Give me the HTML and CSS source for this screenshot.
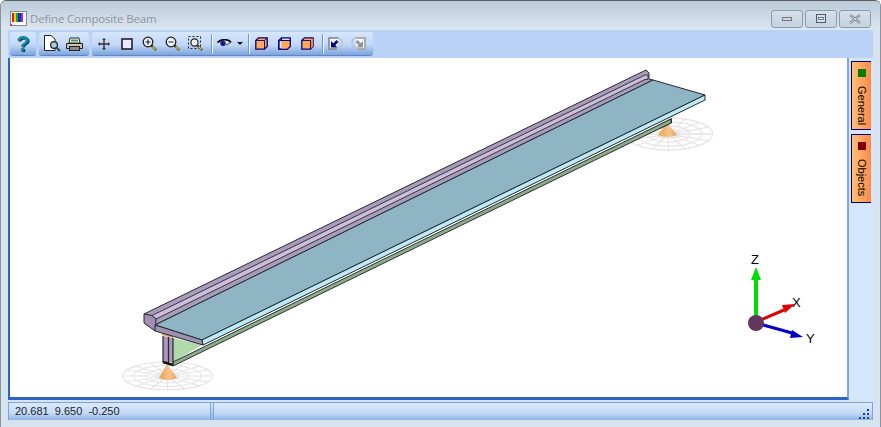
FILE: index.html
```html
<!DOCTYPE html>
<html lang="en">
  <head>
    <meta charset="UTF-8" />
    <title>Define Composite Beam</title>
    <link rel="stylesheet" href="styles.css">
  </head>
  <body>
    <div class="window">
      <!-- Title bar -->
      <div class="titlebar">
        <svg class="app-icon" width="17" height="15" viewBox="0 0 17 15">
          <rect x="0.5" y="0.5" width="16" height="14" fill="#fff" stroke="#8a8a8a" />
          <rect x="2" y="2" width="2" height="9" fill="#e02020" />
          <rect x="4" y="2" width="2" height="9" fill="#f0d000" />
          <rect x="6" y="2" width="2" height="9" fill="#10b020" />
          <rect x="8" y="2" width="3" height="9" fill="#1030d0" />
          <rect x="11" y="2" width="2" height="9" fill="#c020c0" />
          <rect x="0" y="13" width="2" height="2" fill="#d020d0" />
        </svg>
        <span class="title">Define Composite Beam</span>
        <div class="win-buttons">
          <div class="win-btn">
            <svg width="14" height="8" viewBox="0 0 14 8"><rect x="2.5" y="2.500" width="9" height="3" fill="#d4d8de" stroke="#6f7782" /></svg>
          </div>
          <div class="win-btn">
            <svg width="14" height="10" viewBox="0 0 14 10"><rect x="2.5" y="0.5" width="9" height="8" fill="#d4dfeb" stroke="#4f5a68" /><rect x="4.5" y="3.5" width="5" height="2" fill="#fff" stroke="#4f5a68" stroke-width="0.8" /></svg>
          </div>
          <div class="win-btn">
            <svg width="14" height="10" viewBox="0 0 14 10"><path d="M2 1 L12 9 M12 1 L2 9" stroke="#7b838e" stroke-width="2.4" fill="none" /><path d="M2 1 L12 9 M12 1 L2 9" stroke="#e8ecf0" stroke-width="0.8" fill="none" /></svg>
          </div>
        </div>
      </div>

      <!-- Toolbar -->
      <div class="toolbar">
        <div class="tool-group group-help">
          <span class="help-mark">?</span>
        </div>
        <div class="tool-group group-print">
          <span class="slot">
            <svg width="18" height="17" viewBox="0 0 18 17">
              <path d="M1.500 0.500 H8 L12 4 V15.500 H1.500 Z" fill="#fff" stroke="#222" />
              <circle cx="11" cy="10" r="3.4" fill="#a8c8e8" stroke="#222" stroke-width="1.2" />
              <path d="M13.500 12.500 L17 16" stroke="#2a5a60" stroke-width="2.2" />
            </svg>
          </span>
          <span class="slot">
            <svg width="17" height="14" viewBox="0 0 17 14">
              <path d="M4 1 H13 L14 6 H3 Z" fill="#fff" stroke="#222" />
              <rect x="5" y="2.500" width="7" height="2" fill="#3e9a5e" />
              <path d="M0.500 6.500 H16.500 V11.500 H0.500 Z" fill="#c4c4c4" stroke="#222" />
              <rect x="3.500" y="9.500" width="10" height="4" fill="#8a8a8a" stroke="#222" />
              <rect x="11" y="7.500" width="3" height="1.500" fill="#e0d040" />
            </svg>
          </span>
        </div>
        <div class="tool-group group-view">
          <span class="slot">
            <svg width="14" height="14" viewBox="0 0 16 16">
              <path d="M8 1 L10.2 3.4 H8.800 V7.200 H12.600 V5.800 L15 8 L12.600 10.200 V8.800 H8.800 V12.600 H10.200 L8 15 L5.800 12.600 H7.200 V8.800 H3.400 V10.200 L1 8 L3.400 5.800 V7.200 H7.200 V3.400 H5.800 Z" fill="#333" />
            </svg>
          </span>
          <span class="slot">
            <svg width="12" height="12" viewBox="0 0 12 12">
              <rect x="1" y="1" width="10" height="10" fill="#eaeaff" stroke="#222" stroke-width="1.6" />
            </svg>
          </span>
          <span class="slot">
            <svg width="15" height="15" viewBox="0 0 15 15">
              <circle cx="6" cy="6" r="4.800" fill="#eef2ff" stroke="#222" stroke-width="1.3" />
              <path d="M3.500 6 H8.500 M6 3.500 V8.500" stroke="#222" stroke-width="1.200" />
              <path d="M9.500 9.500 L14 14" stroke="#222" stroke-width="2.400" />
              <path d="M10.500 10.500 L13.500 13.500" stroke="#e8d020" stroke-width="1.400" />
            </svg>
          </span>
          <span class="slot">
            <svg width="15" height="15" viewBox="0 0 15 15">
              <circle cx="6" cy="6" r="4.800" fill="#eef2ff" stroke="#222" stroke-width="1.3" />
              <path d="M3.500 6 H8.500" stroke="#222" stroke-width="1.200" />
              <path d="M9.500 9.500 L14 14" stroke="#222" stroke-width="2.400" />
              <path d="M10.500 10.500 L13.500 13.500" stroke="#e8d020" stroke-width="1.400" />
            </svg>
          </span>
          <span class="slot">
            <svg width="15" height="15" viewBox="0 0 15 15">
              <rect x="0.500" y="0.500" width="12" height="12" fill="none" stroke="#222" stroke-dasharray="2 2" />
              <circle cx="6.500" cy="6.500" r="3.600" fill="#eef2ff" stroke="#222" stroke-width="1.200" />
              <path d="M9.500 9.500 L14 14" stroke="#222" stroke-width="2.400" />
              <path d="M10.500 10.500 L13.500 13.500" stroke="#e8d020" stroke-width="1.400" />
            </svg>
          </span>
          <span class="sep sep-first"></span>
          <svg class="eye" width="15" height="9" viewBox="0 0 15 9">
            <path d="M1 4 Q6 -1 13 3 Q8 9 3 7 Z" fill="#e8ecf6" />
            <circle cx="6" cy="4.500" r="2.800" fill="#2222b0" />
            <circle cx="6" cy="4.500" r="1" fill="#0a0a40" />
            <path d="M9 6 Q12 5 14 3" stroke="#777" stroke-width="1.500" fill="none" />
            <path d="M0.500 3.500 Q7 -2 14 3" stroke="#111" stroke-width="1.800" fill="none" />
          </svg>
          <span class="caret"></span>
          <span class="sep sep-second"></span>
          <span class="slot">
            <svg width="13" height="13" viewBox="0 0 13 13">
              <path d="M0.800 3.500 L3.500 0.800 H12.200 V9.500 L9.500 12.200 H0.800 Z" fill="#ffa858" stroke="#000080" stroke-width="1.300" />
              <path d="M0.800 3.500 H9.500 V12.200 M9.500 3.500 L12.200 0.800" fill="none" stroke="#000080" stroke-width="0.900" />
            </svg>
          </span>
          <span class="slot">
            <svg width="13" height="13" viewBox="0 0 13 13">
              <path d="M0.800 3.500 L3.500 0.800 H12.200 V9.500 L9.500 12.200 H0.800 Z" fill="#d4e3fa" stroke="#000080" stroke-width="1.300" />
              <rect x="3.500" y="3.500" width="8.700" height="8.700" fill="#ffa858" />
              <path d="M0.800 3.500 H3.500 V0.800 M3.500 3.500 H12.200 V9.500 L9.500 12.200 H0.800 V3.500" fill="none" stroke="#000080" stroke-width="1.100" />
            </svg>
          </span>
          <span class="slot">
            <svg width="13" height="13" viewBox="0 0 13 13">
              <path d="M0.800 3.500 L3.500 0.800 H12.200 V9.500 L9.500 12.200 H0.800 Z" fill="#ffa858" stroke="#000080" stroke-width="1.300" />
              <path d="M9.800 3.500 L12.200 0.800 V9.500 L9.800 12 Z" fill="#e88a38" />
              <path d="M0.800 3.500 H9.500 V12.200" fill="none" stroke="#000080" stroke-width="0.900" />
            </svg>
          </span>
          <span class="sep sep-third"></span>
          <span class="slot">
            <svg width="15" height="13" viewBox="0 0 15 13">
              <path d="M11 1 H1 V12 H9" fill="#f4f7fd" stroke="#808080" stroke-width="1.500" />
              <path d="M10 1 Q15 3 14 7 Q13 10 10 11.500" fill="none" stroke="#b8c2d2" stroke-width="1.500" />
              <path d="M3 4 L3 10.500 L9.500 10.500 L7.300 8.300 L10.500 5 L8.500 3 L5.300 6.300 Z" fill="#000080" />
            </svg>
          </span>
          <span class="slot">
            <svg width="15" height="13" viewBox="0 0 15 13">
              <path d="M4 1 H14 V12 H6" fill="#f4f7fd" stroke="#9a9a9a" stroke-width="1.500" />
              <path d="M5 1 Q0 3 1 7 Q2 10 5 11.500" fill="none" stroke="#b8c2d2" stroke-width="1.500" />
              <path d="M12 4 L12 10.500 L5.500 10.500 L7.700 8.300 L4.500 5 L6.500 3 L9.700 6.300 Z" fill="#929292" />
            </svg>
          </span>
        </div>
      </div>

      <!-- Model view and side tabs -->
      <div class="main">
        <div class="viewport">
          <svg class="model" viewBox="10 58 837 339" width="837" height="339">
            <defs>
              <g id="grid" fill="none" stroke="#e4e4e4" stroke-width="1.100">
                <ellipse cx="0" cy="0" rx="45" ry="14" />
                <ellipse cx="0" cy="0" rx="34" ry="10.500" />
                <ellipse cx="0" cy="0" rx="22" ry="7" />
                <ellipse cx="0" cy="0" rx="11" ry="3.500" />
                <path d="M-45 0 H45 M0 -14 V14 M-32 -10 L32 10 M-32 10 L32 -10 M-17 -13 L17 13 M-17 13 L17 -13 M-41 -6 L41 6 M-41 6 L41 -6" />
              </g>
              <linearGradient id="coneFill" x1="0" x2="1" y1="0" y2="0">
                <stop offset="0" stop-color="#eda04f" />
                <stop offset="0.6" stop-color="#f6c48c" />
                <stop offset="1" stop-color="#e99d52" />
              </linearGradient>
            </defs>

            <!-- supports -->
            <use href="#grid" transform="translate(167.500 376)" />
            <use href="#grid" transform="translate(668.500 134) scale(0.980 1.150)" />
            <path d="M167 364 L159 378 Q168 382 177 378 Z" fill="url(#coneFill)" />
            <path d="M667 123 L658 135 Q667 139 677 135 Z" fill="url(#coneFill)" />

            <!-- far end of the bottom flange -->
            <path d="M660 124 L672 118 L672 123 L660 129 Z" fill="#2b3a2b" />

            <!-- web and bottom flange -->
            <polygon points="173,338 202,345 173,362" fill="#b1d9ab" />
            <polygon points="173,362 671,119 671,123 173,366" fill="#8fab8e" stroke="#27352a" />

            <!-- end section -->
            <polygon points="163,336 173,338 173,362 163,362" fill="#a897b8" />
            <path d="M163 336 V362 M168.500 337 V363 M173 338 V364" stroke="#29262e" stroke-width="1.200" fill="none" />
            <path d="M163 362 L173 365" stroke="#111" stroke-width="2.500" />
            <path d="M162 334 L173 337" stroke="#e0a060" stroke-width="2" />

            <!-- rib along the slab -->
            <polygon points="144,314 646,70 649,73 649,79 653,80 155,325" fill="#a89cba" stroke="#2a2630" />
            <polygon points="152,315.500 645,75 648,75 648,79.500 645,79.500 156,319" fill="#cabfdb" stroke="#2a2630" stroke-width="0.900" />
            <polygon points="144,314 152,315.500 156,319 155,331 144,323" fill="#a08fb2" stroke="#2a2630" />

            <!-- slab -->
            <polygon points="155,325 653,80 705,95 202,340" fill="#8fb5c5" stroke="#1f2a30" />
            <polygon points="202,340 705,95 705,100 203,345" fill="#bfeaf5" stroke="#1f2a30" />
            <polygon points="155,325 202,340 203,345 155,331" fill="#9f92b0" stroke="#1f2a30" />

            <!-- axes -->
            <path d="M756 322 V278" stroke="#00dd00" stroke-width="4" />
            <path d="M756 267 L761 280 H751 Z" fill="#00dd00" />
            <path d="M756 322 L784 310" stroke="#e00000" stroke-width="3" />
            <path d="M795 304 L785 313 L782 305 Z" fill="#e00000" />
            <path d="M756 323 L792 333" stroke="#0000c8" stroke-width="3" />
            <path d="M803 337 L790 338 L792 330 Z" fill="#0000c8" />
            <circle cx="756" cy="323" r="8" fill="#61365f" />
            <text class="axis-label" x="751" y="264">Z</text>
            <text class="axis-label" x="792" y="307">X</text>
            <text class="axis-label" x="806" y="343">Y</text>
          </svg>
        </div>
        <div class="side-tabs">
          <div class="side-tab">
            <span class="tab-dot dot-green"></span>
            <span class="tab-label">General</span>
          </div>
          <div class="side-tab">
            <span class="tab-dot dot-red"></span>
            <span class="tab-label">Objects</span>
          </div>
        </div>
      </div>

      <!-- Status bar -->
      <div class="statusbar">
        <div class="status-cell cell-coords">20.681&nbsp;&nbsp;9.650&nbsp;&nbsp;-0.250</div>
        <div class="status-cell cell-rest">
          <svg class="grip" width="12" height="12" viewBox="0 0 12 12">
            <path d="M8 1 h2 v2 h-2 Z M4 5 h2 v2 h-2 Z M8 5 h2 v2 h-2 Z M0 9 h2 v2 h-2 Z M4 9 h2 v2 h-2 Z M8 9 h2 v2 h-2 Z" fill="#1f3f7f" />
          </svg>
        </div>
      </div>
    </div>
  </body>
</html>
```

FILE: styles.css
```css
/* General Styling */
html,
body {
  margin: 0;
  padding: 0;
  background-color: #fff;
}

.window {
  width: 881px;
  height: 427px;
  box-sizing: border-box;
  display: flex;
  flex-direction: column;
  padding: 0 8px 7px 7px;
  background-color: #d7e4f0;
  border-top: 1px solid #5a5f66;
  border-left: 1px solid #8a949e;
  border-right: 1px solid #8a949e;
  border-radius: 6px 6px 0 0;
  overflow: hidden;
  font-family: "Liberation Sans", sans-serif;
}

/* Title bar */
.titlebar {
  display: flex;
  align-items: center;
  height: 29px;
  box-sizing: border-box;
  flex: none;
  margin: 0 -8px 0 -7px;
  padding: 6px 9px 0 9px;
  background: linear-gradient(#bccbd9, #dbe7f2);
}

.app-icon {
  flex: none;
  margin-right: 3px;
}

.title {
  font-family: "Open Sans", sans-serif;
  font-size: 11.5px;
  letter-spacing: -0.15px;
  color: #8f9499;
}

.win-buttons {
  margin-left: auto;
  align-self: flex-start;
  margin-top: 3px;
  display: flex;
  gap: 2px;
}

.win-btn {
  width: 32px;
  height: 18px;
  box-sizing: border-box;
  border: 1px solid #8c9aaa;
  border-radius: 3px;
  background: linear-gradient(#d4e0ea, #c3d2e0);
  display: flex;
  align-items: center;
  justify-content: center;
}

/* Toolbar */
.toolbar {
  flex: none;
  height: 28px;
  box-sizing: border-box;
  display: flex;
  gap: 3px;
  padding: 2px 0 2px 2px;
  background-color: #b9d2f5;
  margin-right: -1px;
}

.tool-group {
  display: flex;
  align-items: center;
  height: 24px;
  border-radius: 3px;
  background: linear-gradient(#d6e6fc 0%, #c2d8f7 55%, #7ea4dc 100%);
  border-bottom: 1px solid #5f86c4;
  box-sizing: border-box;
}

.group-help {
  width: 26px;
  justify-content: center;
}

.help-mark {
  font-weight: bold;
  font-size: 22px;
  line-height: 22px;
  color: #0e8a9c;
  text-shadow: 1px 1px 0 #0b3a66;
}

.group-print {
  width: 50px;
  padding-left: 1px;
  box-sizing: border-box;
}

.group-view {
  width: 281px;
}

.slot {
  flex: none;
  width: 23px;
  display: flex;
  align-items: center;
  justify-content: center;
}

.sep {
  flex: none;
  width: 1px;
  height: 20px;
  background-color: #6f96d0;
  box-shadow: 1px 0 0 #f2f7ff;
}

.sep-first {
  margin-left: 4px;
}

.sep-second {
  margin: 0 1px 0 5px;
}

.sep-third {
  margin: 0 1px 0 3px;
}

.eye {
  flex: none;
  margin-left: 5px;
}

.caret {
  flex: none;
  width: 0;
  height: 0;
  margin-left: 5px;
  border-left: 3px solid transparent;
  border-right: 3px solid transparent;
  border-top: 3px solid #111;
}

/* Model view */
.main {
  flex: none;
  height: 342px;
  display: flex;
  margin-right: -1px;
}

.viewport {
  flex: none;
  width: 841px;
  height: 342px;
  box-sizing: border-box;
  background-color: #fff;
  border-left: 2px solid #2b66c6;
  border-right: 2px solid #7ea6e0;
  border-bottom: 3px solid #2b66c6;
  overflow: hidden;
}

.model {
  display: block;
}

.axis-label {
  font-family: "Liberation Sans", sans-serif;
  font-size: 13px;
  fill: #000;
}

/* Side tabs */
.side-tabs {
  flex: 1;
  display: flex;
  flex-direction: column;
  gap: 4px;
  padding: 3px 0 0 2px;
  background-color: #d6e6fc;
}

.side-tab {
  width: 20px;
  height: 69px;
  box-sizing: border-box;
  display: flex;
  flex-direction: column;
  align-items: center;
  border: 1px solid #000080;
  border-right: none;
  padding-top: 7px;
  background: linear-gradient(to right, #ffc078, #ff8a4a);
}

.tab-dot {
  width: 8px;
  height: 8px;
  margin-bottom: 9px;
}

.dot-green {
  background-color: #008000;
}

.dot-red {
  background-color: #800000;
}

.tab-label {
  writing-mode: vertical-rl;
  font-size: 11px;
  line-height: 14px;
  color: #000;
}

/* Status bar */
.statusbar {
  flex: none;
  height: 18px;
  margin-top: 2px;
  margin-right: -1px;
  display: flex;
  gap: 2px;
  background: linear-gradient(#dbe9fb, #8fb3e6);
  border-top: 1px solid #7da3dc;
  box-sizing: border-box;
}

.status-cell {
  height: 100%;
  box-sizing: border-box;
  border-right: 1px solid #7da3dc;
  border-left: 1px solid #7da3dc;
  background: linear-gradient(#dbe9fb 0%, #c4daf7 60%, #8fb3e6 100%);
  font-size: 11px;
  line-height: 16px;
  color: #222;
}

.cell-coords {
  width: 203px;
  padding-left: 6px;
}

.cell-rest {
  flex: 1;
  display: flex;
  justify-content: flex-end;
  align-items: flex-end;
}

.grip {
  display: block;
  margin-right: 1px;
}
```
